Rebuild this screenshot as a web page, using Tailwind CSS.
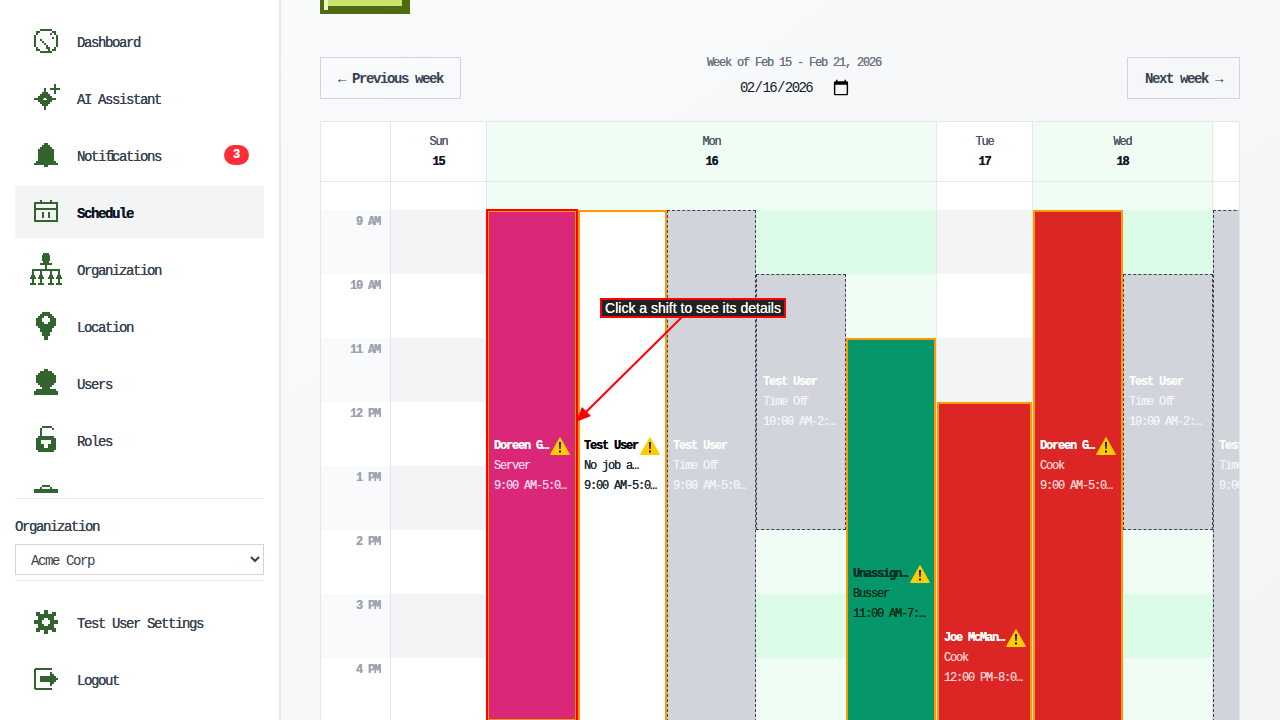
<!DOCTYPE html>
<html lang="en">
<head>
<meta charset="utf-8">
<title>Schedule</title>
<script src="https://cdn.jsdelivr.net/npm/@tailwindcss/browser@4"></script>
</head>
<body class="h-screen w-[1280px] overflow-hidden flex font-['Liberation_Mono',monospace] text-[14px] tracking-[-1.4px] text-[#374151] [text-shadow:0_0_0.4px_currentColor]">

<aside class="w-[281px] h-[720px] shrink-0 flex flex-col bg-white border-r-2 border-[#e5e7eb] px-[15px] relative z-10">
  <nav class="h-[493px] overflow-hidden pt-[15px] flex flex-col gap-[5px] shrink-0">
    <a class="h-[52px] shrink-0 flex items-center gap-[15px] px-[15px]">
      <svg class="w-8 h-8 shrink-0 fill-[#33632f]" viewBox="0 0 32 32" shape-rendering="crispEdges"><path d="M10 4h12v2H10zM6 6h4v2H6zM22 6h4v2h-4zM6 8h2v2H6zM24 8h2v2h-2zM4 10h2v12H4zM26 10h2v12h-2zM6 22h2v2H6zM24 22h2v2h-2zM6 24h4v2H6zM22 24h4v2h-4zM10 26h12v2H10zM10 14h2v2h-2zM12 16h2v2h-2zM14 18h2v2h-2zM16 20h2v2h-2zM16 22h4v2h-4zM18 24h2v2h-2zM20 8h2v2h-2zM22 12h2v2h-2z"/></svg>
      <span class="pt-[4px]">Dashboard</span>
    </a>
    <a class="h-[52px] shrink-0 flex items-center gap-[15px] px-[15px]">
      <svg class="w-8 h-8 shrink-0 fill-[#33632f]" viewBox="0 0 32 32" shape-rendering="crispEdges"><path d="M14 6h2v22h-2zM4 16h22v2H4zM12 10h6v14h-6zM10 12h10v10H10zM8 14h14v6H8zM24 2h2v10h-2zM20 6h10v2H20z"/><path class="fill-white" d="M14 16h2v2h-2zM13 17h4v1h-4z"/></svg>
      <span class="pt-[4px]">AI Assistant</span>
    </a>
    <a class="h-[52px] shrink-0 flex items-center gap-[15px] pl-[15px] pr-[15px]">
      <svg class="w-8 h-8 shrink-0 fill-[#33632f]" viewBox="0 0 32 32" shape-rendering="crispEdges"><path d="M14 4h4v2h-4zM12 6h8v2h-8zM10 8h12v2H10zM8 10h16v12H8zM6 22h20v2H6zM4 24h24v2H4zM14 26h4v2h-4z"/></svg>
      <span class="flex-1 pt-[4px]">Noti<span class="tracking-[-5.4px]">f</span><span class="tracking-[-4.4px]">i</span>cations</span>
      <span class="w-[25px] h-5 rounded-full bg-[#ff2d37] text-white text-[12px] tracking-normal font-bold flex items-center justify-center">3</span>
    </a>
    <a class="h-[52px] shrink-0 flex items-center gap-[15px] px-[15px] bg-[#f3f4f6] text-[#111827] font-bold">
      <svg class="w-8 h-8 shrink-0 fill-[#33632f]" viewBox="0 0 32 32" shape-rendering="crispEdges"><path d="M4 6h24v2H4zM4 12h24v2H4zM4 24h24v2H4zM4 6h2v20H4zM26 6h2v20h-2zM10 4h2v4h-2zM20 4h2v4h-2zM12 16h2v6h-2zM18 16h2v6h-2z"/></svg>
      <span class="pt-[4px]">Schedule</span>
    </a>
    <a class="h-[52px] shrink-0 flex items-center gap-[15px] px-[15px]">
      <svg class="w-8 h-8 shrink-0 fill-[#33632f]" viewBox="0 0 32 32" shape-rendering="crispEdges"><path d="M13 0h6v2h-6zM12 2h8v6h-8zM13 8h6v2h-6zM10 10h12v2H10zM15 12h2v4h-2zM2 16h28v2H2zM2 18h2v4H2zM10 18h2v4h-2zM20 18h2v4h-2zM28 18h2v4h-2zM1 22h4v4H1zM9 22h4v4H9zM19 22h4v4h-4zM27 22h4v4h-4zM0 24h6v2H0zM8 24h6v2H8zM18 24h6v2h-6zM26 24h6v2h-6zM2 26h2v4H2zM10 26h2v4h-2zM20 26h2v4h-2zM28 26h2v4h-2zM0 30h6v2H0zM8 30h6v2H8zM18 30h6v2h-6zM26 30h6v2h-6z"/></svg>
      <span class="pt-[4px]">Organization</span>
    </a>
    <a class="h-[52px] shrink-0 flex items-center gap-[15px] px-[15px]">
      <svg class="w-8 h-8 shrink-0 fill-[#33632f]" viewBox="0 0 32 32" shape-rendering="crispEdges"><path d="M12 2h8v2h-8zM10 4h12v2H10zM8 6h16v2H8zM6 8h20v8H6zM8 16h16v2H8zM10 18h12v4H10zM12 22h8v4h-8zM14 26h4v4h-4z"/><path class="fill-white" d="M14 6h4v2h-4zM12 8h8v4h-8zM14 12h4v2h-4z"/></svg>
      <span class="pt-[4px]">Location</span>
    </a>
    <a class="h-[52px] shrink-0 flex items-center gap-[15px] px-[15px]">
      <svg class="w-8 h-8 shrink-0 fill-[#33632f]" viewBox="0 0 32 32" shape-rendering="crispEdges"><path d="M14 2h4v2h-4zM10 4h12v2H10zM8 6h16v2H8zM6 8h20v8H6zM8 16h16v2H8zM10 18h12v2H10zM12 20h8v2h-8zM14 22h4v2h-4zM6 22h20v2H6zM4 24h24v4H4z"/></svg>
      <span class="pt-[4px]">Users</span>
    </a>
    <a class="h-[52px] shrink-0 flex items-center gap-[15px] px-[15px]">
      <svg class="w-8 h-8 shrink-0 fill-[#33632f]" viewBox="0 0 32 32" shape-rendering="crispEdges"><path d="M12 2h10v2H12zM10 4h2v10h-2zM22 4h2v2h-2zM8 12h16v2H8zM6 14h20v12H6zM8 26h16v2H8z"/><path class="fill-white" d="M11 16h10v4H11zM14 20h4v4h-4z"/></svg>
      <span class="pt-[4px]">Roles</span>
    </a>
    <a class="h-[52px] shrink-0 flex items-center gap-[15px] px-[15px]">
      <svg class="w-8 h-8 shrink-0 fill-[#33632f]" viewBox="0 0 32 32" shape-rendering="crispEdges"><path d="M12 4h8v2h-8zM10 6h2v2h-2zM20 6h2v2h-2zM4 8h24v20H4z"/></svg>
    </a>
  </nav>
  <div class="mt-[5px] border-t border-[#e5e7eb] pt-[20px] pb-[5px]">
    <label class="block leading-[16px] mb-[9px]">Organization</label>
    <select class="block w-full h-[31px] border border-[#d1d5db] pl-[11px] pt-[2px] bg-white text-[#374151] text-[14px] tracking-[-1.4px] font-['Liberation_Mono',monospace]"><option>Acme Corp</option></select>
  </div>
  <div class="border-t border-[#e5e7eb] pt-[15px] flex flex-col gap-[5px]">
    <a class="h-[52px] shrink-0 flex items-center gap-[15px] px-[15px]">
      <svg class="w-8 h-8 shrink-0 fill-[#33632f]" viewBox="0 0 32 32" shape-rendering="crispEdges"><path d="M14 4h4v4h-4zM14 24h4v4h-4zM4 14h4v4H4zM24 14h4v4h-4zM6 6h4v4H6zM22 6h4v4h-4zM6 22h4v4H6zM22 22h4v4h-4zM10 8h12v16H10zM8 10h16v12H8z"/><path class="fill-white" d="M14 12h4v8h-4zM12 14h8v4h-8z"/></svg>
      <span class="pt-[4px]">Test User Settings</span>
    </a>
    <a class="h-[52px] shrink-0 flex items-center gap-[15px] px-[15px]">
      <svg class="w-8 h-8 shrink-0 fill-[#33632f]" viewBox="0 0 32 32" shape-rendering="crispEdges"><path d="M5 5h17v2H5zM5 25h17v2H5zM4 6h2v20H4zM10 13h10v6H10zM20 9h2v14h-2zM22 11h2v10h-2zM24 13h2v6h-2zM26 15h2v2h-2z"/></svg>
      <span class="pt-[4px]">Logout</span>
    </a>
  </div>
</aside>

<main class="flex-1 h-[720px] overflow-hidden relative bg-linear-to-br from-[#f9fafb] to-[#f3f4f6] pl-[39px] pr-[40px]">
  <div class="w-[90px] h-[40px] -mt-[26px] bg-[#4d6b10] pl-1 pr-2 pb-1 flex">
    <div class="w-1 h-full bg-[#eef6c4]"></div>
    <div class="flex-1 h-[32px] bg-[#cce36b]"></div>
  </div>

  <div class="mt-[43px] h-[42px] flex items-start justify-between">
    <button class="h-[42px] w-[141px] border border-[#d1d5db] pt-[2px] text-[14px] tracking-[-1.4px] text-[#374151] font-bold">← Previous week</button>
    <div class="h-[42px] flex flex-col items-center">
      <div class="text-[12px] tracking-[-1.2px] leading-[14px] text-[#6b7280] -mt-[1px]">Week of Feb 15 - Feb 21, 2026</div>
      <input type="date" value="2026-02-16" class="mt-[7px] h-[24px] w-[116px] pl-[3px] text-[14px] tracking-[-1.6px] text-[#111827] font-['Liberation_Mono',monospace] [&::-webkit-calendar-picker-indicator]:w-[18px] [&::-webkit-calendar-picker-indicator]:h-[18px] [&::-webkit-calendar-picker-indicator]:p-0 [&::-webkit-calendar-picker-indicator]:mr-[2px]">
    </div>
    <button class="h-[42px] w-[113px] border border-[#d1d5db] pt-[2px] text-[14px] tracking-[-1.4px] text-[#374151] font-bold">Next week →</button>
  </div>

  <div class="mt-[22px] w-[920px] border border-[#e5e7eb] overflow-hidden">
    <div class="w-[1100px] grid grid-cols-[70px_96px_450px_96px_180px_96px] grid-rows-[60px_28px_512px] text-[12px] tracking-[-1.2px]">
      <!-- header row -->
      <div class="bg-white border-r border-b border-[#e5e7eb]"></div>
      <div class="bg-white border-r border-b border-[#e5e7eb] flex flex-col items-center pt-[10px] leading-[20px]"><span class="text-[#4b5563]">Sun</span><span class="font-bold text-[#111827]">15</span></div>
      <div class="bg-[#f0fdf4] border-r border-b border-[#e5e7eb] flex flex-col items-center pt-[10px] leading-[20px]"><span class="text-[#4b5563]">Mon</span><span class="font-bold text-[#111827]">16</span></div>
      <div class="bg-white border-r border-b border-[#e5e7eb] flex flex-col items-center pt-[10px] leading-[20px]"><span class="text-[#4b5563]">Tue</span><span class="font-bold text-[#111827]">17</span></div>
      <div class="bg-[#f0fdf4] border-r border-b border-[#e5e7eb] flex flex-col items-center pt-[10px] leading-[20px]"><span class="text-[#4b5563]">Wed</span><span class="font-bold text-[#111827]">18</span></div>
      <div class="bg-white border-r border-b border-[#e5e7eb] flex flex-col items-center pt-[10px] leading-[20px]"><span class="text-[#4b5563]">Thu</span><span class="font-bold text-[#111827]">19</span></div>
      <!-- all-day row -->
      <div class="bg-white border-r border-[#e5e7eb]"></div>
      <div class="bg-white border-r border-[#e5e7eb]"></div>
      <div class="bg-[#f0fdf4] border-r border-[#e5e7eb]"></div>
      <div class="bg-white border-r border-[#e5e7eb]"></div>
      <div class="bg-[#f0fdf4] border-r border-[#e5e7eb]"></div>
      <div class="bg-white border-r border-[#e5e7eb]"></div>
      <!-- time column -->
      <div class="border-r border-[#e5e7eb] grid grid-rows-[repeat(8,64px)] text-[#9ca3af] font-bold text-right leading-[14px]">
        <div class="bg-[#f9fafb] pt-[5px] pr-[10px]">9 AM</div>
        <div class="bg-white pt-[5px] pr-[10px]">10 AM</div>
        <div class="bg-[#f9fafb] pt-[5px] pr-[10px]">11 AM</div>
        <div class="bg-white pt-[5px] pr-[10px]">12 PM</div>
        <div class="bg-[#f9fafb] pt-[5px] pr-[10px]">1 PM</div>
        <div class="bg-white pt-[5px] pr-[10px]">2 PM</div>
        <div class="bg-[#f9fafb] pt-[5px] pr-[10px]">3 PM</div>
        <div class="bg-white pt-[5px] pr-[10px]">4 PM</div>
      </div>
      <!-- Sun -->
      <div class="border-r border-[#e5e7eb] grid grid-rows-[repeat(8,64px)]">
        <div class="bg-[#f3f4f6]"></div><div class="bg-white"></div><div class="bg-[#f3f4f6]"></div><div class="bg-white"></div><div class="bg-[#f3f4f6]"></div><div class="bg-white"></div><div class="bg-[#f3f4f6]"></div><div class="bg-white"></div>
      </div>
      <!-- Mon -->
      <div class="relative border-r border-[#e5e7eb] grid grid-rows-[repeat(8,64px)]">
        <div class="bg-[#dcfce7]"></div><div class="bg-[#f0fdf4]"></div><div class="bg-[#dcfce7]"></div><div class="bg-[#f0fdf4]"></div><div class="bg-[#dcfce7]"></div><div class="bg-[#f0fdf4]"></div><div class="bg-[#dcfce7]"></div><div class="bg-[#f0fdf4]"></div>

        <div class="absolute left-[91px] top-0 w-[89px] h-[512px] bg-white border-2 border-[#ff9900] pl-[4px] pr-[5px] flex flex-col justify-center leading-[20px] text-[#1f2937]">
          <div class="flex items-center justify-between font-bold text-black"><span class="whitespace-nowrap">Test User</span><svg class="w-5 h-5 shrink-0" viewBox="0 0 20 20"><path d="M10 1.5 19.5 18.5H.5z" fill="#ffcc00" stroke="#ffcc00" stroke-linejoin="round"/><path d="M9 6h2l-.4 7h-1.2zM9 14.5h2v2H9z" fill="#111"/></svg></div>
          <div class="whitespace-nowrap">No job a…</div>
          <div class="whitespace-nowrap">9:00 AM-5:0…</div>
        </div>
        <div class="absolute -left-px -top-px w-[92px] h-[513px] z-10 bg-[#db2777] border-2 border-[#f00] shadow-[inset_0_0_0_1px_#ff9900] pl-[6px] pr-[6px] flex flex-col justify-center leading-[20px] text-[#fbcfe8]">
          <div class="flex items-center justify-between font-bold text-white"><span class="whitespace-nowrap">Doreen G…</span><svg class="w-5 h-5 shrink-0" viewBox="0 0 20 20"><path d="M10 1.5 19.5 18.5H.5z" fill="#ffcc00" stroke="#ffcc00" stroke-linejoin="round"/><path d="M9 6h2l-.4 7h-1.2zM9 14.5h2v2H9z" fill="#111"/></svg></div>
          <div class="whitespace-nowrap">Server</div>
          <div class="whitespace-nowrap">9:00 AM-5:0…</div>
        </div>
        <div class="absolute left-[180px] top-0 w-[89px] h-[512px] bg-[#d1d5db] border border-dashed border-[#374151] pl-[5px] flex flex-col justify-center leading-[20px] text-[#f3f4f6]">
          <div class="font-bold whitespace-nowrap text-white/80">Test User</div>
          <div class="whitespace-nowrap">Time O<span class="tracking-[-4.2px]">f</span><span class="tracking-[-4.2px]">f</span></div>
          <div class="whitespace-nowrap">9:00 AM-5:0…</div>
        </div>
        <div class="absolute left-[269px] top-[64px] w-[90px] h-[256px] bg-[#d1d5db] border border-dashed border-[#374151] pl-[6px] flex flex-col justify-center leading-[20px] text-[#f3f4f6]">
          <div class="font-bold whitespace-nowrap text-white/80">Test User</div>
          <div class="whitespace-nowrap">Time O<span class="tracking-[-4.2px]">f</span><span class="tracking-[-4.2px]">f</span></div>
          <div class="whitespace-nowrap">10:00 AM-2:…</div>
        </div>
        <div class="absolute left-[359px] top-[128px] w-[90px] h-[512px] bg-[#059669] border-2 border-[#ff9900] pl-[5px] pr-[4px] flex flex-col justify-center leading-[20px] text-[#052e16]">
          <div class="flex items-center justify-between font-bold text-[#022c22]"><span class="whitespace-nowrap">Unassign…</span><svg class="w-5 h-5 shrink-0" viewBox="0 0 20 20"><path d="M10 1.5 19.5 18.5H.5z" fill="#ffcc00" stroke="#ffcc00" stroke-linejoin="round"/><path d="M9 6h2l-.4 7h-1.2zM9 14.5h2v2H9z" fill="#111"/></svg></div>
          <div class="whitespace-nowrap">Busser</div>
          <div class="whitespace-nowrap">11:00 AM-7:…</div>
        </div>
      </div>
      <!-- Tue -->
      <div class="relative border-r border-[#e5e7eb] grid grid-rows-[repeat(8,64px)]">
        <div class="bg-[#f3f4f6]"></div><div class="bg-white"></div><div class="bg-[#f3f4f6]"></div><div class="bg-white"></div><div class="bg-[#f3f4f6]"></div><div class="bg-white"></div><div class="bg-[#f3f4f6]"></div><div class="bg-white"></div>
        <div class="absolute left-0 top-[192px] w-[95px] h-[512px] bg-[#dc2626] border-2 border-[#ff9900] pl-[5px] pr-[4px] flex flex-col justify-center leading-[20px] text-[#fecaca]">
          <div class="flex items-center justify-between font-bold text-white"><span class="whitespace-nowrap">Joe McMan…</span><svg class="w-5 h-5 shrink-0" viewBox="0 0 20 20"><path d="M10 1.5 19.5 18.5H.5z" fill="#ffcc00" stroke="#ffcc00" stroke-linejoin="round"/><path d="M9 6h2l-.4 7h-1.2zM9 14.5h2v2H9z" fill="#111"/></svg></div>
          <div class="whitespace-nowrap">Cook</div>
          <div class="whitespace-nowrap">12:00 PM-8:0…</div>
        </div>
      </div>
      <!-- Wed -->
      <div class="relative border-r border-[#e5e7eb] grid grid-rows-[repeat(8,64px)]">
        <div class="bg-[#dcfce7]"></div><div class="bg-[#f0fdf4]"></div><div class="bg-[#dcfce7]"></div><div class="bg-[#f0fdf4]"></div><div class="bg-[#dcfce7]"></div><div class="bg-[#f0fdf4]"></div><div class="bg-[#dcfce7]"></div><div class="bg-[#f0fdf4]"></div>
        <div class="absolute left-0 top-0 w-[90px] h-[512px] bg-[#dc2626] border-2 border-[#ff9900] pl-[5px] pr-[5px] flex flex-col justify-center leading-[20px] text-[#fecaca]">
          <div class="flex items-center justify-between font-bold text-white"><span class="whitespace-nowrap">Doreen G…</span><svg class="w-5 h-5 shrink-0" viewBox="0 0 20 20"><path d="M10 1.5 19.5 18.5H.5z" fill="#ffcc00" stroke="#ffcc00" stroke-linejoin="round"/><path d="M9 6h2l-.4 7h-1.2zM9 14.5h2v2H9z" fill="#111"/></svg></div>
          <div class="whitespace-nowrap">Cook</div>
          <div class="whitespace-nowrap">9:00 AM-5:0…</div>
        </div>
        <div class="absolute left-[90px] top-[64px] w-[90px] h-[256px] bg-[#d1d5db] border border-dashed border-[#374151] pl-[5px] flex flex-col justify-center leading-[20px] text-[#f3f4f6]">
          <div class="font-bold whitespace-nowrap text-white/80">Test User</div>
          <div class="whitespace-nowrap">Time O<span class="tracking-[-4.2px]">f</span><span class="tracking-[-4.2px]">f</span></div>
          <div class="whitespace-nowrap">10:00 AM-2:…</div>
        </div>
      </div>
      <!-- Thu -->
      <div class="relative border-r border-[#e5e7eb] grid grid-rows-[repeat(8,64px)]">
        <div class="bg-[#f3f4f6]"></div><div class="bg-white"></div><div class="bg-[#f3f4f6]"></div><div class="bg-white"></div><div class="bg-[#f3f4f6]"></div><div class="bg-white"></div><div class="bg-[#f3f4f6]"></div><div class="bg-white"></div>
        <div class="absolute left-0 top-0 w-[90px] h-[512px] bg-[#d1d5db] border border-dashed border-[#374151] pl-[5px] flex flex-col justify-center leading-[20px] text-[#f3f4f6]">
          <div class="font-bold whitespace-nowrap text-white/80">Test User</div>
          <div class="whitespace-nowrap">Time O<span class="tracking-[-4.2px]">f</span><span class="tracking-[-4.2px]">f</span></div>
          <div class="whitespace-nowrap">9:00 AM-5:0…</div>
        </div>
      </div>
    </div>
  </div>

  <!-- onboarding hint overlay, coordinates relative to main (x-281) -->
  <svg class="absolute left-0 top-0 w-[999px] h-[720px] z-20 pointer-events-none" viewBox="281 0 999 720"><path d="M683 316 584 414" stroke="#f00" stroke-width="2" fill="none"/><path d="M576 422 582 407 591 416z" fill="#f00"/></svg>
  <div class="absolute left-[319px] top-[298px] z-30 w-[186px] h-[20px] bg-[#222] border-2 border-[#f00] font-['Liberation_Sans',sans-serif] text-[14px] tracking-normal leading-[16px] text-white text-center whitespace-nowrap">Click a shift to see its details</div>
</main>
</body>
</html>
